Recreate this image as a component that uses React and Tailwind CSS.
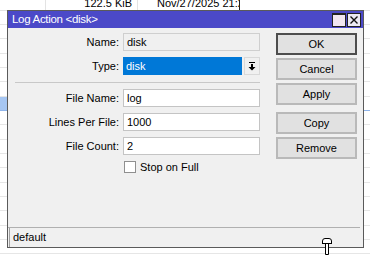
export default function App() {
  const rowH = [
    "h-[14px]", "h-[14px]", "h-[15px]", "h-[14px]", "h-[14px]", "h-[15px]",
    "h-[14px]", "h-[14px]", "h-[15px]", "h-[14px]", "h-[14px]", "h-[15px]",
    "h-[14px]", "h-[14px]", "h-[15px]", "h-[14px]", "h-[14px]", "h-[15px]",
  ];
  const fields = [
    { label: "File Name:", value: "log" },
    { label: "Lines Per File:", value: "1000" },
    { label: "File Count:", value: "2" },
  ];
  const Btn = ({ children, primary, extra }) => (
    <div
      className={
        "h-[22px] flex items-center justify-center bg-[#e1e1e1] " +
        (primary ? "border-2 border-[#4d4d4d] " : "border-2 border-[#b9b9b9] ") +
        (extra ? "mt-[4px]" : "")
      }
    >
      {children}
    </div>
  );
  return (
    <div className="relative w-[370px] h-[255px] overflow-hidden bg-white font-['Liberation_Sans',Arial,sans-serif] text-[11px] text-black">
      {/* background table */}
      <div className="flex flex-col">
        <div className="flex h-[11px] border-b border-[#e3e3e3] leading-[11px]">
          <div className="w-[46px] border-r border-[#e3e3e3]" />
          <div className="w-[92px] border-r border-[#e3e3e3] flex items-end justify-end pr-[5px] pb-[1px] whitespace-nowrap">
            122.5 KiB
          </div>
          <div className="w-[102px] border-r border-[#222] flex items-end pl-[19px] pb-[1px] overflow-hidden whitespace-nowrap">
            Nov/27/2025 21:29
          </div>
          <div className="flex-1" />
        </div>
        {rowH.map((h, i) => (
          <div
            key={i}
            className={
              "flex border-b " +
              h +
              (i === 6 ? " border-[#8fb4ea]" : " border-[#e6e6e6]")
            }
          >
            <div className={"w-[46px] " + (i === 6 ? "bg-[#a6c6f2]" : "")} />
            <div className="flex-1" />
          </div>
        ))}
      </div>

      {/* dialog window */}
      <div className="absolute left-[7px] top-[10px] w-[357px] h-[238px] flex flex-col border border-[#5a5a5a] bg-[#f0f0f0]">
        <div className="h-[17px] bg-[#4b49c8] flex items-center pl-[4px] pr-[2px] text-white">
          <span className="flex-1 text-[11.5px] tracking-[-0.3px]">Log Action &lt;disk&gt;</span>
          <div className="flex gap-[1px]">
            <div className="w-[14px] h-[14px] bg-[#f1e6f1] border border-[#222] border-t-2" />
            <div className="w-[14px] h-[14px] bg-[#ebe9f3] border border-[#222] flex items-center justify-center">
              <svg width="10" height="10" viewBox="0 0 10 10">
                <path d="M1.5 1.5L8.5 8.5M8.5 1.5L1.5 8.5" stroke="#111" strokeWidth="1.4" />
              </svg>
            </div>
          </div>
        </div>

        <div className="flex-1 flex pt-[5px] pl-[7px] pr-[6px]">
          <div className="w-[245px] flex flex-col">
            <div className="flex h-[18px] mb-[6px] items-center">
              <div className="w-[104px] text-right">Name:</div>
              <div className="ml-[4px] w-[137px] h-[18px] border border-[#cfcfcf] bg-[#f0f0f0] pl-[3px] flex items-center">
                disk
              </div>
            </div>
            <div className="flex h-[18px] mb-[6px] items-center">
              <div className="w-[104px] text-right">Type:</div>
              <div className="ml-[4px] w-[119px] h-[18px] bg-[#0078d7] text-white pl-[3px] flex items-center">
                disk
              </div>
              <div className="ml-[2px] w-[16px] h-[18px] border border-[#d9d9d9] bg-[#f0f0f0] flex items-center justify-center">
                <svg width="8" height="9" viewBox="0 0 8 9">
                  <path d="M1 0.5H7" stroke="#000" strokeWidth="1" />
                  <path d="M3 2H5V5H7.5L4 8.5L0.5 5H3Z" fill="#000" />
                </svg>
              </div>
            </div>
            <div className="mt-[1px] h-px bg-[#c8c8c8] mb-[6px]" />
            {fields.map((f) => (
              <div key={f.label} className="flex h-[18px] mb-[6px] items-center">
                <div className="w-[104px] text-right whitespace-nowrap">{f.label}</div>
                <div className="ml-[4px] w-[137px] h-[18px] border border-[#c4c4c4] bg-white pl-[3px] flex items-center">
                  {f.value}
                </div>
              </div>
            ))}
            <div className="flex h-[12px] items-center">
              <div className="ml-[109px] w-[12px] h-[12px] border border-[#8f8f8f] bg-white" />
              <div className="ml-[4px]">Stop on Full</div>
            </div>
          </div>

          <div className="ml-[16px] w-[81px] flex flex-col gap-[3px]">
            <Btn primary>OK</Btn>
            <Btn>Cancel</Btn>
            <Btn>Apply</Btn>
            <Btn extra>Copy</Btn>
            <Btn>Remove</Btn>
          </div>
        </div>

        <div className="h-[20px] border-t border-[#b0b0b0] mr-[3px] flex">
          <div className="ml-px border-l border-[#a0a0a0] flex-1 flex items-center pl-[3px]">default</div>
        </div>
      </div>

      {/* mouse cursor */}
      <svg className="absolute left-[321px] top-[237px]" width="12" height="18" viewBox="0 0 12 18">
        <path d="M4.5 6.5V17.5H7.5V6.5" fill="#fff" stroke="#000" />
        <path d="M1.5 6.5V4Q1.5 1.5 4 1.5H8Q10.5 1.5 10.5 4V6.5Z" fill="#fff" stroke="#000" />
        <path d="M1 6.5H11" stroke="#000" />
      </svg>
    </div>
  );
}
